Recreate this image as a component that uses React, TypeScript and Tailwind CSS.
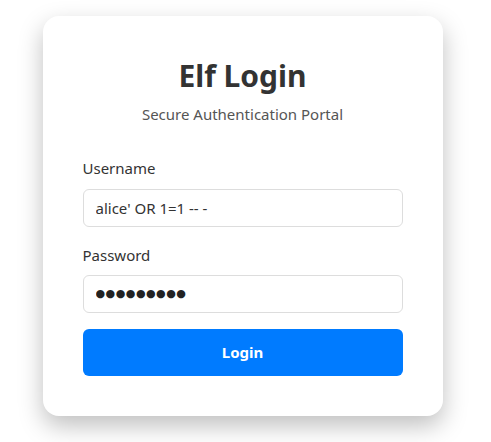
export default function App() {
    return (
        <div className="min-h-[442px] bg-white flex justify-center items-start pt-4 pr-[6px] font-['Noto_Sans',sans-serif]">
            <div className="w-[400px] bg-white rounded-2xl p-10 shadow-[0_10px_25px_rgba(0,0,0,0.25)]">
                {/* Header */}
                <div className="text-center">
                    <h1 className="text-[30px] leading-[40px] font-bold text-[#333]">Elf Login</h1>
                    <p className="mt-[7px] text-[15px] text-[#555]">Secure Authentication Portal</p>
                </div>

                {/* Form */}
                <form className="mt-[31px]" onSubmit={(e) => e.preventDefault()}>
                    <label className="block text-[15px] text-[#333] mb-[10px]">Username</label>
                    <input
                        type="text"
                        defaultValue="alice' OR 1=1 -- -"
                        className="w-full h-[38px] px-3 text-[15px] text-[#333] border border-[#ddd] rounded-md outline-none"
                    />

                    <label className="block text-[15px] text-[#333] mt-[17px] mb-2">Password</label>
                    <input
                        type="text"
                        aria-label="Password"
                        defaultValue="●●●●●●●●●"
                        className="w-full h-[38px] px-3 text-[11px] tracking-[0.5px] text-[#222] border border-[#ddd] rounded-md outline-none font-['DejaVu_Sans',sans-serif]"
                    />

                    <button
                        type="submit"
                        className="mt-4 w-full h-[47px] bg-[#007bff] text-white text-[15px] font-bold rounded-md"
                    >
                        Login
                    </button>
                </form>
            </div>
        </div>
    );
}
